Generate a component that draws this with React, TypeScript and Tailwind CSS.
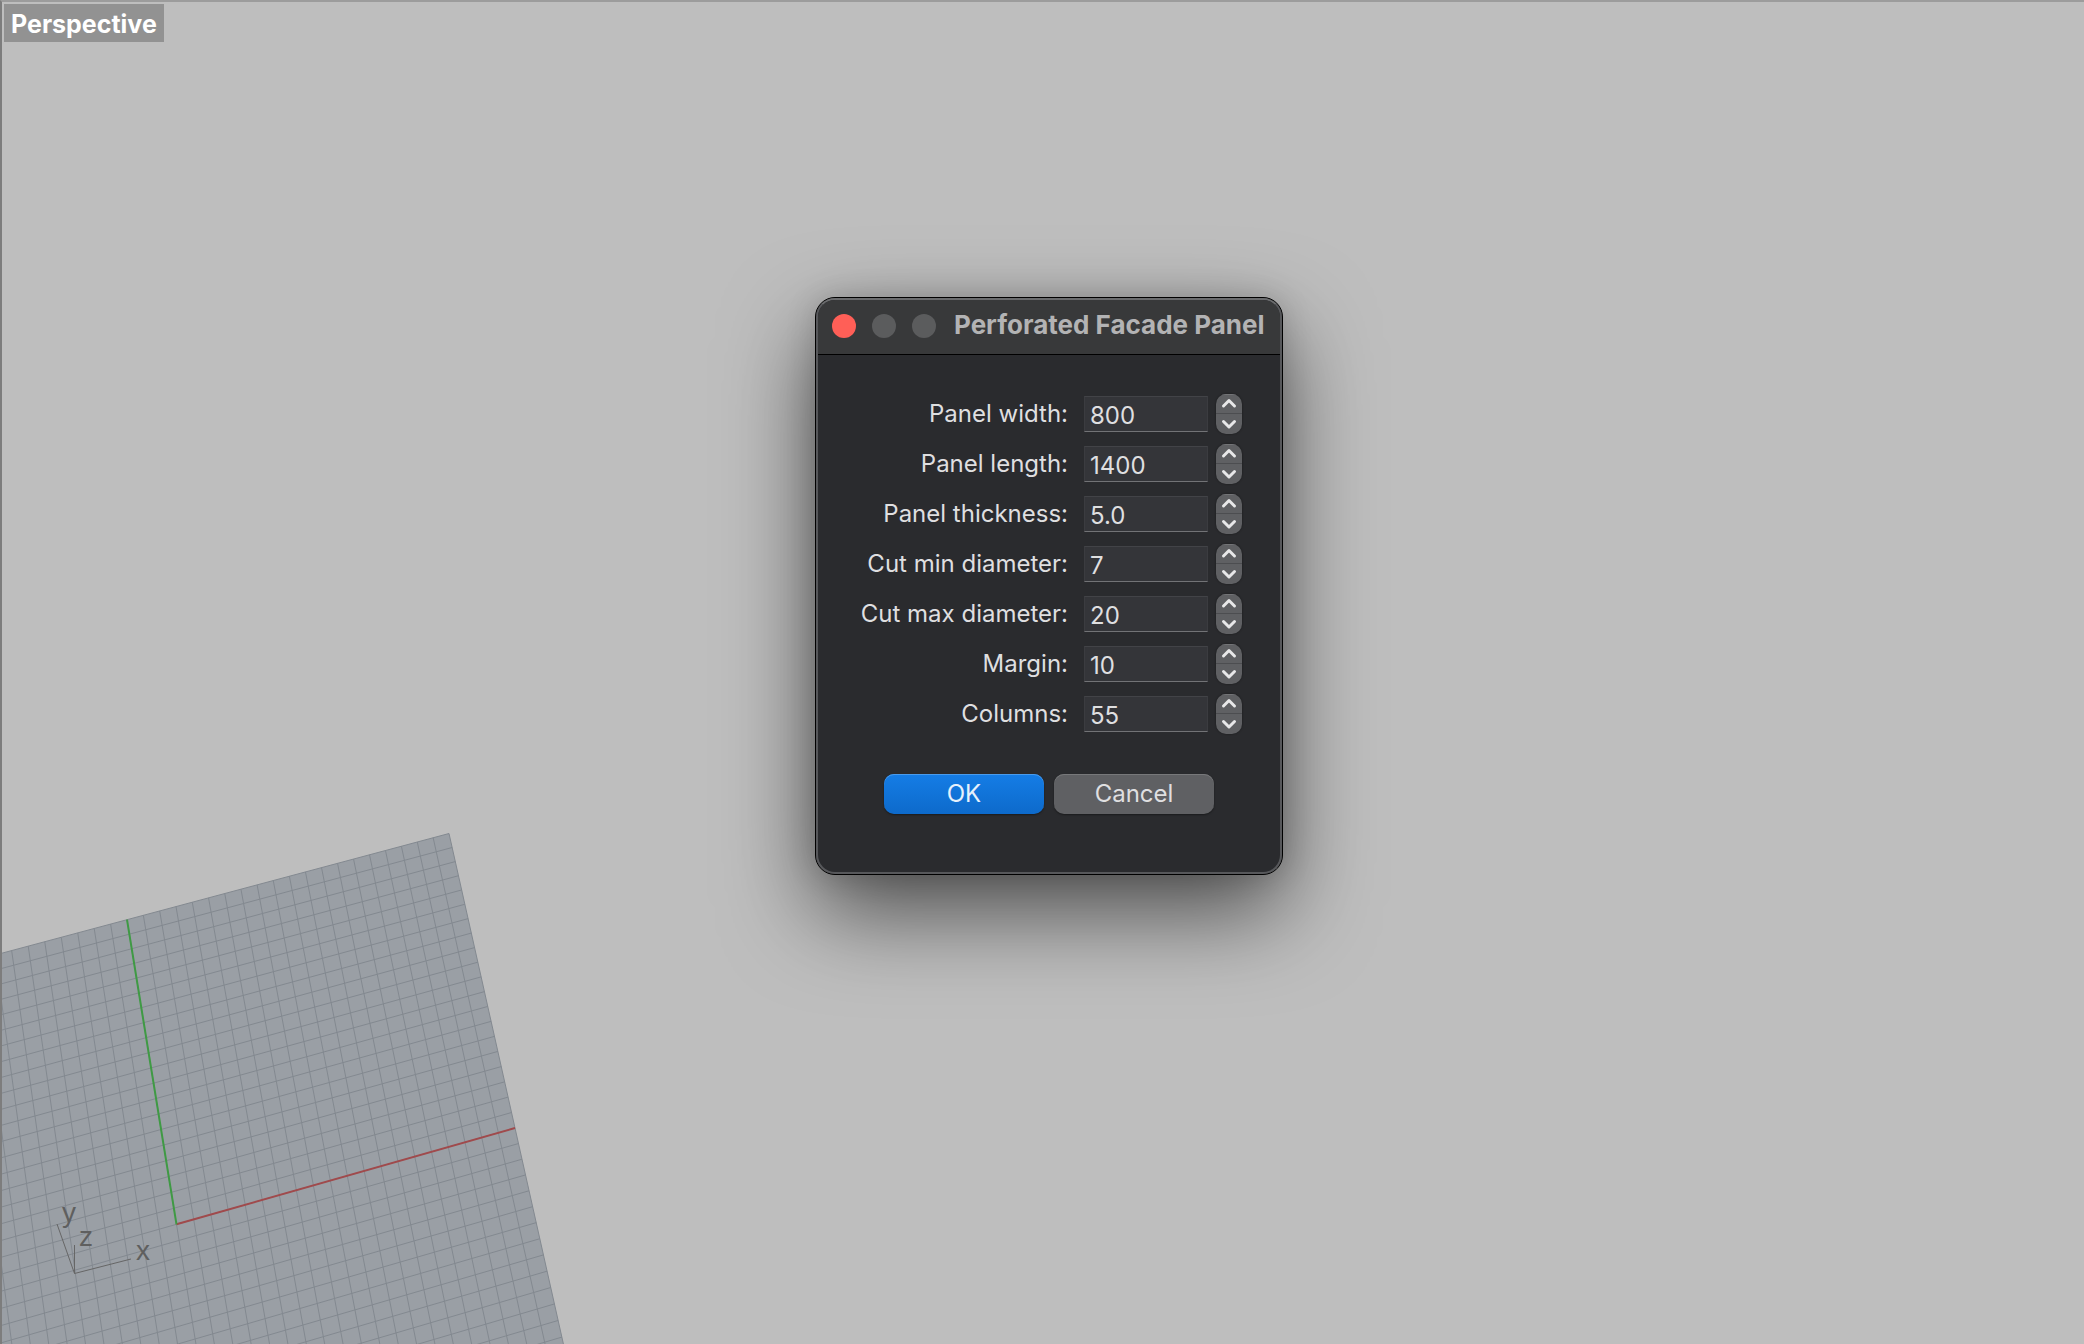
import { useState } from 'react';

interface Field {
    id: string;
    label: string;
    value: string;
}

type Point = [number, number];

const FIELDS: Field[] = [
    { id: 'width', label: 'Panel width:', value: '800' },
    { id: 'length', label: 'Panel length:', value: '1400' },
    { id: 'thickness', label: 'Panel thickness:', value: '5.0' },
    { id: 'cut-min', label: 'Cut min diameter:', value: '7' },
    { id: 'cut-max', label: 'Cut max diameter:', value: '20' },
    { id: 'margin', label: 'Margin:', value: '10' },
    { id: 'columns', label: 'Columns:', value: '55' },
];

const CELLS = 20;

// screen corners of the positive quadrant of the construction plane
const P00: Point = [176.5, 404.3];
const P10: Point = [515, 308];
const P11: Point = [449, 13.5];
const P01: Point = [127, 99.7];

// square -> quad perspective mapping
const project = (i: number, j: number): Point => {
    const u = i / CELLS;
    const v = j / CELLS;
    const dx1 = P10[0] - P11[0];
    const dx2 = P01[0] - P11[0];
    const dx3 = P00[0] - P10[0] + P11[0] - P01[0];
    const dy1 = P10[1] - P11[1];
    const dy2 = P01[1] - P11[1];
    const dy3 = P00[1] - P10[1] + P11[1] - P01[1];
    const det = dx1 * dy2 - dx2 * dy1;
    const g = (dx3 * dy2 - dx2 * dy3) / det;
    const h = (dx1 * dy3 - dx3 * dy1) / det;
    const w = g * u + h * v + 1;
    return [
        ((P10[0] - P00[0] + g * P10[0]) * u + (P01[0] - P00[0] + h * P01[0]) * v + P00[0]) / w,
        ((P10[1] - P00[1] + g * P10[1]) * u + (P01[1] - P00[1] + h * P01[1]) * v + P00[1]) / w,
    ];
};

const STEPS = Array.from({ length: CELLS * 2 + 1 }, (_, n) => n - CELLS);

const segment = (a: Point, b: Point) => `M${a.join(' ')}L${b.join(' ')}`;

const ConstructionPlane = () => {
    const outline = [project(-CELLS, -CELLS), project(CELLS, -CELLS), project(CELLS, CELLS), project(-CELLS, CELLS)];

    const lines = STEPS.map(
        (n) => segment(project(n, -CELLS), project(n, CELLS)) + segment(project(-CELLS, n), project(CELLS, n)),
    ).join('');

    return (
        <svg className="absolute bottom-0 left-0" width="600" height="524" viewBox="2 0 600 524" aria-hidden="true">
            <polygon points={outline.map((p) => p.join(',')).join(' ')} fill="#9a9fa5" />
            <path d={lines} stroke="#838990" strokeWidth="1" fill="none" />
            <path d={segment(P00, P10)} stroke="#a04a4c" strokeWidth="2" />
            <path d={segment(P00, P01)} stroke="#3f9a44" strokeWidth="2" />

            {/* world axis icon */}
            <path d="M57 404L74.500 453.500L131 439M74.500 453.500V425" stroke="#666666" strokeWidth="1" fill="none" />
            <g className="font-['Liberation_Sans'] text-[28px]" fill="#5f5f5f">
                <text x="62" y="402">y</text>
                <text x="79" y="426">z</text>
                <text x="136" y="440">x</text>
            </g>
        </svg>
    );
};

const Chevron = ({ d }: { d: string }) => (
    <svg width="26" height="20" viewBox="0 0 26 20" fill="none" stroke="#e8e8e9" strokeWidth="3" strokeLinecap="round" strokeLinejoin="round">
        <path d={d} />
    </svg>
);

const NumberRow = ({ id, label, value }: Field) => {
    const [current, setCurrent] = useState(value);
    const digits = value.includes('.') ? 1 : 0;
    const step = (by: number) => setCurrent((Number(current) + by).toFixed(digits));
    const name = label.replace(':', '');

    return (
        <div className="flex h-10 items-center justify-end">
            <label htmlFor={id} className="mr-4 whitespace-nowrap leading-8">{label}</label>
            <input
                id={id}
                type="text"
                inputMode="decimal"
                value={current}
                onChange={(e) => setCurrent(e.target.value)}
                className="mr-2 h-9 w-[124px] border border-t-[#424347] border-x-[#3b3c40] border-b-[#727376] bg-[#343539] pt-[3px] pl-[5px] leading-8 outline-none"
            />
            <div className="flex w-[26px] flex-col overflow-hidden rounded-[10px] bg-[#5f6063] shadow-[0_0_2px_rgba(0,0,0,0.5)]">
                <button type="button" aria-label={`Increase ${name}`} onClick={() => step(1)} className="h-5 border-b border-[#4c4d50] shadow-[inset_0_1px_0_#737477]">
                    <Chevron d="M7.500 12L13 6.500L18.500 12" />
                </button>
                <button type="button" aria-label={`Decrease ${name}`} onClick={() => step(-1)} className="h-5">
                    <Chevron d="M7.500 7.500L13 13L18.500 7.500" />
                </button>
            </div>
        </div>
    );
};

const PanelDialog = () => {
    return (
        <section
            role="dialog"
            aria-labelledby="dialog-title"
            className="relative w-[468px] rounded-[20px] border border-black bg-[#2a2b2e] shadow-[0_36px_90px_rgba(0,0,0,0.6),0_0_30px_rgba(0,0,0,0.15)]"
        >
            <div className="overflow-hidden rounded-[19px] border-2 border-[#57585b] border-t-[#6b6c6e]">
                <header className="flex h-[55px] items-center gap-4 border-b border-black bg-[#38393a] pb-[2px] pl-[14px]">
                    <button type="button" aria-label="Close" className="size-6 shrink-0 rounded-full bg-[#ff5f57]" />
                    <button type="button" aria-label="Minimize" disabled className="size-6 shrink-0 rounded-full bg-[#5b5c5d]" />
                    <button type="button" aria-label="Zoom" disabled className="size-6 shrink-0 rounded-full bg-[#5b5c5d]" />
                    <h1 id="dialog-title" className="ml-[2px] pb-[2px] text-[26px] leading-8 font-bold whitespace-nowrap text-[#b3b3b4]">
                        Perforated Facade Panel
                    </h1>
                </header>

                <form className="flex flex-col px-[38px] pt-[39px] pb-[58px] text-2xl text-[#dfdfe0]" onSubmit={(e) => e.preventDefault()}>
                    <div className="flex flex-col gap-[10px]">
                        {FIELDS.map((field) => (
                            <NumberRow key={field.id} {...field} />
                        ))}
                    </div>
                    <div className="mt-10 flex justify-center gap-[10px]">
                        <button type="submit" className="h-10 w-40 rounded-[10px] bg-linear-to-b from-[#157de6] to-[#0d6acb] leading-8 text-[#e6f1fc] shadow-[inset_0_1px_0_#4a9bec,0_1px_2px_rgba(0,0,0,0.4)]">
                            OK
                        </button>
                        <button type="button" className="h-10 w-40 rounded-[10px] bg-[#5f6063] leading-8 shadow-[inset_0_1px_0_#77787a,0_1px_2px_rgba(0,0,0,0.4)]">
                            Cancel
                        </button>
                    </div>
                </form>
            </div>
        </section>
    );
};

const App = () => {
    return (
        <main className="relative min-h-screen overflow-hidden border-t-2 border-l-2 border-t-[#9c9c9c] border-l-[#7d7d7d] bg-[#bebebe] font-['Inter',sans-serif]">
            <ConstructionPlane />
            <h2 className="absolute top-[2px] left-[2px] bg-[#929292] px-[7px] pt-[5px] pb-[3px] text-[25px] leading-[30px] font-bold text-white">
                Perspective
            </h2>
            <div className="flex justify-center pt-[295px] pl-3">
                <PanelDialog />
            </div>
        </main>
    );
};

export default App;
